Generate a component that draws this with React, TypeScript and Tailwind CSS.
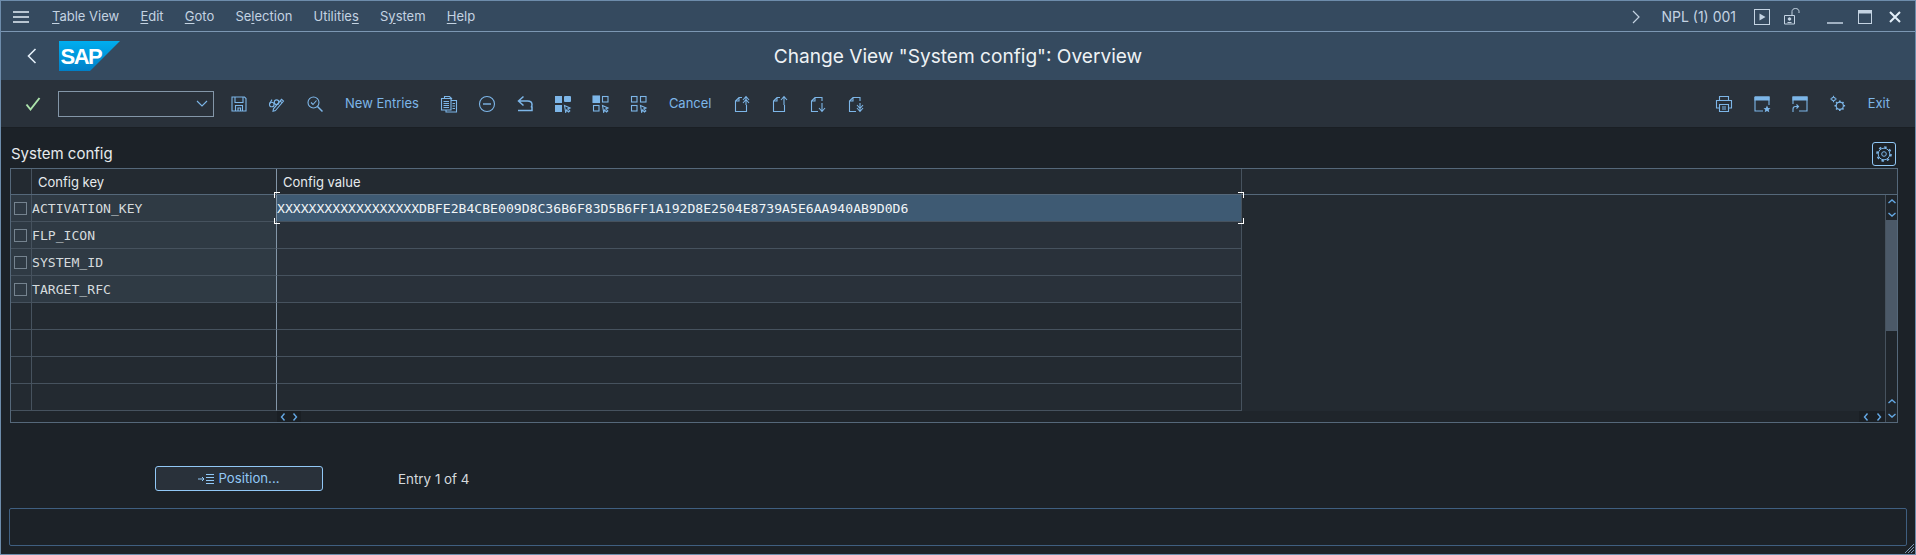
import type { ReactNode } from "react";

const menuItems: [string, string, string][] = [
  ["", "T", "able View"],
  ["", "E", "dit"],
  ["", "G", "oto"],
  ["Se", "l", "ection"],
  ["Utilitie", "s", ""],
  ["S", "y", "stem"],
  ["", "H", "elp"],
];

const rows = ["ACTIVATION_KEY", "FLP_ICON", "SYSTEM_ID", "TARGET_RFC", "", "", "", ""];

const Icon = ({ children, size = 18 }: { children: ReactNode; size?: number }) => (
  <svg width={size} height={size} viewBox="0 0 18 18" fill="none" stroke="currentColor" strokeWidth="1.1">
    {children}
  </svg>
);

const Cursor = () => (
  <path d="M10.5 10.5l5.5 2.5-2.2.9 2 2-1.3 1.2-1.9-2-.9 2.2z" fill="#29313a" />
);

const toolIcons: Record<string, ReactNode> = {
  save: (
    <>
      <path d="M2 2h12.500l1.500 1.500V16H2z" />
      <path d="M5 2v5.500h8V2M5.500 16v-5.500h7V16M8 16v-3h2.500v3" />
    </>
  ),
  glasses: (
    <>
      <circle cx="3.8" cy="9.5" r="2.3" />
      <circle cx="8.6" cy="7.2" r="2.3" />
      <path d="M1.6 8.6l2.4-4M6.1 8.5l.3-.3M7.5 15.5l8-9.5-2-1.7-8 9.5-.5 2.5zM12 6l2 1.7" />
    </>
  ),
  search: (
    <>
      <circle cx="7.5" cy="7.5" r="5.5" />
      <path d="M11.5 11.5l5 5" strokeWidth="1.5" />
      <path d="M5 7.5l2 2 3.5-4" />
    </>
  ),
  copy: (
    <>
      <path d="M1.500 3.500h9.500v11.500H1.500zM4.500 3.500V1.500h5l2.500 2.500" />
      <path d="M11 5.500h5.500v11.500H6v-2M3.500 6.500h5.500M3.500 8.500h5.500M3.500 10.500h5.500M3.500 12.500h5.500M12.500 8.500h2.500M12.500 11h2.500M12.500 13.500h2.500" />
    </>
  ),
  minus: (
    <>
      <circle cx="9" cy="9" r="7.500" />
      <path d="M5 9h8" strokeWidth="1.400" />
    </>
  ),
  undo: <path d="M7.500 1.500L2.500 6l5 4.500M3 6h8.500c3 0 4.500 1.500 4.500 3.500 0 2-1 3-1 3M2 15.500h14v-4" strokeWidth="1.500" />,
  selectAll: (
    <>
      <rect x="1" y="1" width="7" height="7" fill="currentColor" stroke="none" />
      <rect x="10" y="1" width="7" height="6" rx="1" fill="currentColor" stroke="none" />
      <rect x="1" y="10" width="7" height="7" fill="currentColor" stroke="none" />
      <Cursor />
    </>
  ),
  selectBlock: (
    <>
      <rect x="1" y="1" width="6.500" height="6.500" fill="currentColor" />
      <rect x="10.500" y="1.500" width="5.500" height="5.500" />
      <rect x="1.500" y="10.500" width="5.500" height="5.500" />
      <Cursor />
    </>
  ),
  deselect: (
    <>
      <rect x="1.500" y="1.500" width="5.500" height="5.500" />
      <rect x="10.500" y="1.500" width="5.500" height="5.500" />
      <rect x="1.500" y="10.500" width="5.500" height="5.500" />
      <Cursor />
    </>
  ),
  first: (
    <>
      <path d="M9 2.500H6L2.500 6v10.500h11V10M2.500 6H6V2.500" fill="none" />
      <path d="M13 10V1.500M10 5l3-3.500L16 5M10 8l3-3.500L16 8" />
    </>
  ),
  prev: (
    <>
      <path d="M9 2.500H6L2.500 6v10.500h11V10M2.500 6H6V2.500" />
      <path d="M13 10V1.500M10 5l3-3.500L16 5" />
    </>
  ),
  next: (
    <>
      <path d="M13 6V2.500H6L2.500 6v10.500H9M2.500 6H6V2.500" />
      <path d="M13 8v8.500M10 13l3 3.500 3-3.500" />
    </>
  ),
  last: (
    <>
      <path d="M13 6V2.500H6L2.500 6v10.500H9M2.500 6H6V2.500" />
      <path d="M13 8v8.500M10 10l3 3.500 3-3.500M10 13l3 3.500 3-3.500" />
    </>
  ),
  print: (
    <>
      <path d="M4.500 5V1.500h9V5M4.500 13H1.500V5.500h15V13h-3" />
      <path d="M4.500 9.500h9v7h-9zM7 12h4M7 14h4" />
    </>
  ),
  windowStar: (
    <>
      <path d="M2 2h14v8M2 2v14h8" />
      <path d="M2 2h14v3H2z" fill="currentColor" />
      <path d="M14 10.500l1.100 2.500 2.400.2-1.800 1.600.6 2.500-2.300-1.300-2.300 1.300.6-2.500-1.800-1.600 2.400-.2z" fill="currentColor" stroke="none" />
    </>
  ),
  windowArrow: (
    <>
      <path d="M2 9V2h14v14H8" />
      <path d="M2 2h14v3H2z" fill="currentColor" />
      <path d="M2 17v-3c0-1.500 1-2.500 2.500-2.500H7M5.500 9.500l2 2-2 2" />
    </>
  ),
  gears: (
    <>
      <circle cx="4.500" cy="4" r="1.800" />
      <path d="M4.500 .8v1.400M4.500 5.800v1.400M1.300 4h1.400M6.300 4h1.400" />
      <circle cx="10.800" cy="10.800" r="3.600" strokeWidth="1.200" />
      <path d="M10.800 5.500v1.700M10.800 14.400v1.700M5.500 10.800h1.700M14.400 10.800h1.700M7.100 7.100l1.100 1.100M13.400 13.400l1.100 1.100M14.500 7.100l-1.100 1.100M8.200 13.400l-1.100 1.100" strokeWidth="1.600" />
    </>
  ),
};

const ToolIcon = ({ name }: { name: string }) => (
  <div className="w-[38px] h-[46px] flex items-center justify-center text-[#7db6e8]">
    <Icon>{toolIcons[name]}</Icon>
  </div>
);

const TextButton = ({ label }: { label: string }) => (
  <div className="h-[46px] px-[11px] flex items-center text-[13px] text-[#7db6e8]">{label}</div>
);

const Corner = ({ className }: { className: string }) => (
  <span className={`absolute z-10 w-[6px] h-[6px] border-white ${className}`} />
);

const Chevron = ({ dir }: { dir: "up" | "down" | "left" | "right" }) => {
  const d = {
    up: "M1.500 6L5 3l3.500 3",
    down: "M1.500 4L5 7l3.500-3",
    left: "M6.500 1.500L3.500 5l3 3.500",
    right: "M3.500 1.500l3 3.500-3 3.500",
  }[dir];
  return (
    <svg width="10" height="10" viewBox="0 0 10 10" fill="none" stroke="#64a8e4" strokeWidth="1.400">
      <path d={d} />
    </svg>
  );
};

export default function App() {
  return (
    <div
      className="relative w-screen h-screen overflow-hidden flex flex-col border border-[#6d8cab] bg-[#1c2228] text-[#d5dadd]"
      style={{ fontFamily: 'Inter, "Noto Sans", sans-serif' }}
    >
      {/* Menu bar */}
      <div className="h-[31px] shrink-0 flex items-center bg-[#354a5f] border-b border-[#7c97b3] pl-[12px] pr-[14px] pt-[1px] text-[13px] text-[#c4d3e2]">
        <svg width="16" height="12" viewBox="0 0 16 12" stroke="#e3eef8" strokeWidth="1.500" className="mr-[23px]">
          <path d="M0 1h16M0 6h16M0 11h16" />
        </svg>
        <div className="flex gap-[21.200px]">
          {menuItems.map(([before, key, after]) => (
            <span key={before + key + after}>
              {before}
              <span className="underline underline-offset-2">{key}</span>
              {after}
            </span>
          ))}
        </div>
        <div className="ml-auto flex items-center">
          <svg width="10" height="14" viewBox="0 0 10 14" fill="none" stroke="#c4d3e2" strokeWidth="1.200" className="mr-[20px]">
            <path d="M2 1l6 6-6 6" />
          </svg>
          <span className="mr-[18px] text-[14px]">NPL (1) 001</span>
          <svg width="16" height="16" viewBox="0 0 16 16" fill="none" stroke="#c4d3e2" className="mr-[14px]">
            <rect x=".5" y=".5" width="15" height="15" />
            <path d="M5.500 4.500l6 3.500-6 3.500z" fill="#c4d3e2" stroke="none" />
          </svg>
          <svg width="17" height="17" viewBox="0 0 17 17" fill="none" stroke="#c4d3e2" className="mr-[26px]">
            <path d="M.5 7.500h10v8.500H.5zM8 7V3.500C8 1.500 9.500.5 11.500.5S15 1.500 15 3.500V5" />
            <circle cx="5.500" cy="11" r="1.300" fill="#c4d3e2" />
            <path d="M3.500 14.500h4" />
          </svg>
          <svg width="16" height="16" viewBox="0 0 16 16" stroke="#c4d3e2" strokeWidth="1.500" className="mr-[15px]">
            <path d="M0 14h16" />
          </svg>
          <svg width="14" height="14" viewBox="0 0 14 14" fill="none" stroke="#c4d3e2" className="mr-[17px]">
            <rect x=".5" y=".5" width="13" height="13" />
            <path d="M0 2h14" strokeWidth="3" />
          </svg>
          <svg width="12" height="12" viewBox="0 0 12 12" stroke="#e3eef8" strokeWidth="2">
            <path d="M1 1l10 10M11 1L1 11" />
          </svg>
        </div>
      </div>

      {/* Title bar */}
      <div className="h-[48px] shrink-0 grid grid-cols-[1fr_auto_1fr] items-center bg-[#354a5f]">
        <div className="flex items-center pl-[26px]">
          <svg width="10" height="16" viewBox="0 0 10 16" fill="none" stroke="#e3eef8" strokeWidth="1.600" className="mr-[22px]">
            <path d="M8.500 1L1.500 8l7 7" />
          </svg>
          <svg width="62" height="30" viewBox="0 0 62 30">
            <defs>
              <linearGradient id="sapBlue" x1="0" y1="0" x2="0" y2="1">
                <stop offset="0" stopColor="#00aeef" />
                <stop offset="1" stopColor="#0080c8" />
              </linearGradient>
            </defs>
            <path d="M0 0h61L31 30H0z" fill="url(#sapBlue)" />
            <text x="1.500" y="23" fill="#fff" fontSize="22" fontWeight="700" letterSpacing="-1.500" style={{ fontFamily: '"Liberation Sans", sans-serif' }}>
              SAP
            </text>
          </svg>
        </div>
        <div className="text-[19.100px] pt-[1px] text-[#eef2f5]">Change View "System config": Overview</div>
        <div />
      </div>

      {/* Toolbar */}
      <div className="h-[48px] shrink-0 flex items-center bg-[#29313a] border-b border-[#1a1f24] pt-[1px] pl-[13px] pr-[14px]">
        <div className="w-[38px] flex justify-center">
          <svg width="16" height="16" viewBox="0 0 16 16" fill="none" stroke="#abe2ab" strokeWidth="2">
            <path d="M1.500 8.500l4 5L14.500 2" />
          </svg>
        </div>
        <div className="ml-[6px] mr-[6px] w-[156px] h-[26px] border border-[#8396a8] bg-[#29313a] flex items-center justify-end pr-[5px]">
          <svg width="12" height="8" viewBox="0 0 12 8" fill="none" stroke="#7db6e8" strokeWidth="1.100">
            <path d="M1 1l5 5 5-5" />
          </svg>
        </div>
        <ToolIcon name="save" />
        <ToolIcon name="glasses" />
        <ToolIcon name="search" />
        <TextButton label="New Entries" />
        <ToolIcon name="copy" />
        <ToolIcon name="minus" />
        <ToolIcon name="undo" />
        <ToolIcon name="selectAll" />
        <ToolIcon name="selectBlock" />
        <ToolIcon name="deselect" />
        <TextButton label="Cancel" />
        <ToolIcon name="first" />
        <ToolIcon name="prev" />
        <ToolIcon name="next" />
        <ToolIcon name="last" />
        <div className="ml-auto flex items-center">
          <ToolIcon name="print" />
          <ToolIcon name="windowStar" />
          <ToolIcon name="windowArrow" />
          <ToolIcon name="gears" />
          <TextButton label="Exit" />
        </div>
      </div>

      {/* Content */}
      <div className="flex-1 flex flex-col pl-[9px] min-h-0">
        <div className="h-[40px] w-[1888px] shrink-0 flex items-end justify-between pb-[2px]">
          <span className="text-[15px] leading-[20px] ml-[1px] mb-[2px] text-[#e6eaed]">System config</span>
          <div className="w-[24px] h-[24px] mr-[2px] rounded-[3px] border border-[#91c8f6] flex items-center justify-center">
            <svg width="18" height="18" viewBox="0 0 18 18" fill="none" stroke="#7db6e8">
              <circle cx="9" cy="9" r="2.300" />
              <circle cx="9" cy="9" r="5.800" strokeWidth="1" />
              <circle cx="9" cy="9" r="7" strokeDasharray="2.500 3" strokeWidth="1.600" />
            </svg>
          </div>
        </div>

        {/* Table */}
        <div className="w-[1888px] h-[255px] shrink-0 flex flex-col border border-[#55687a] bg-[#232a31]">
          <div className="h-[26px] shrink-0 flex border-b border-[#55687a] text-[13px] text-[#e6eaed]">
            <div className="w-[21px] border-r border-[#46525e]" />
            <div className="w-[245px] border-r border-[#8396a8] pl-[6px] pt-[2px] flex items-center">Config key</div>
            <div className="w-[965px] border-r border-[#46525e] pl-[6px] pt-[2px] flex items-center">Config value</div>
          </div>
          <div className="flex-1 flex min-h-0">
            <div className="flex-1 flex flex-col min-w-0">
              {rows.map((key, i) => (
                <div key={i} className="h-[27px] shrink-0 flex">
                  <div className={`w-[21px] border-r border-b border-[#46525e] flex items-center pl-[3px] ${key ? "bg-[#2f3a44]" : ""}`}>
                    {key && <span className="w-[13px] h-[13px] border border-[#75838f]" />}
                  </div>
                  <div
                    className={`w-[245px] border-r border-b border-r-[#8396a8] border-b-[#46525e] flex items-center pt-[1px] text-[13.120px] ${key ? "bg-[#2f3a44]" : ""}`}
                    style={{ fontFamily: '"DejaVu Sans Mono", monospace' }}
                  >
                    {key}
                  </div>
                  <div
                    className={`relative w-[965px] border-r border-b border-[#46525e] flex items-center pt-[1px] text-[13.120px] ${
                      i === 0 ? "bg-[#3e5a73] text-[#f0f4f7]" : key ? "bg-[#29313a]" : ""
                    }`}
                    style={{ fontFamily: '"DejaVu Sans Mono", monospace' }}
                  >
                    {i === 0 && (
                      <>
                        XXXXXXXXXXXXXXXXXXDBFE2B4CBE009D8C36B6F83D5B6FF1A192D8E2504E8739A5E6AA940AB9D0D6
                        <Corner className="-left-[3px] -top-[3px] border-l border-t" />
                        <Corner className="-right-[3px] -top-[3px] border-r border-t" />
                        <Corner className="-left-[3px] -bottom-[3px] border-l border-b" />
                        <Corner className="-right-[3px] -bottom-[3px] border-r border-b" />
                      </>
                    )}
                  </div>
                </div>
              ))}
              <div className="flex-1 flex">
                <div className="w-[266px] bg-[#1f252b]" />
                <div className="w-[24px] bg-[#1a1f24] flex items-center justify-around">
                  <Chevron dir="left" />
                  <Chevron dir="right" />
                </div>
                <div className="flex-1 bg-[#1f252b]" />
                <div className="w-[26px] bg-[#1a1f24] flex items-center justify-around">
                  <Chevron dir="left" />
                  <Chevron dir="right" />
                </div>
              </div>
            </div>
            <div className="w-[12px] shrink-0 border-l border-[#46525e] bg-[#1f252b] flex flex-col items-center">
              <div className="h-[13px] pt-[1px] flex items-center"><Chevron dir="up" /></div>
              <div className="h-[12px] flex items-center"><Chevron dir="down" /></div>
              <div className="w-full h-[111px] bg-[#4b5968]" />
              <div className="mt-auto h-[13px] flex items-center"><Chevron dir="up" /></div>
              <div className="h-[13px] mb-[1px] flex items-center"><Chevron dir="down" /></div>
            </div>
          </div>
        </div>

        {/* Position */}
        <div className="mt-[43px] ml-[145px] flex items-center h-[25px] shrink-0">
          <div className="w-[168px] h-[25px] rounded-[3px] border border-[#91c8f6] bg-[#29313a] flex items-center justify-center gap-[4px] pt-[1px] text-[13.200px] text-[#91c8f6]">
            <svg width="16" height="12" viewBox="0 0 16 12" fill="none" stroke="#91c8f6" strokeWidth="1">
              <path d="M0 6h6M4 4l2 2-2 2M8 1.500h8M8 4.500h8M8 7.500h8M8 10.500h8" />
            </svg>
            Position...
          </div>
          <span className="ml-[75px] pt-[1px] text-[13.400px] text-[#d5dadd]">Entry 1 of 4</span>
        </div>

        {/* Message area */}
        <div className="mt-[17px] -ml-[1px] w-[1898px] h-[38px] shrink-0 rounded-[2px] border border-[#3f5f80]" />
      </div>

      <svg width="9" height="9" viewBox="0 0 9 9" stroke="#7c97b3" strokeWidth="1" className="absolute right-[1px] bottom-[1px]">
        <path d="M0 9l9-9M3 9l6-6M6 9l3-3" />
      </svg>
    </div>
  );
}
